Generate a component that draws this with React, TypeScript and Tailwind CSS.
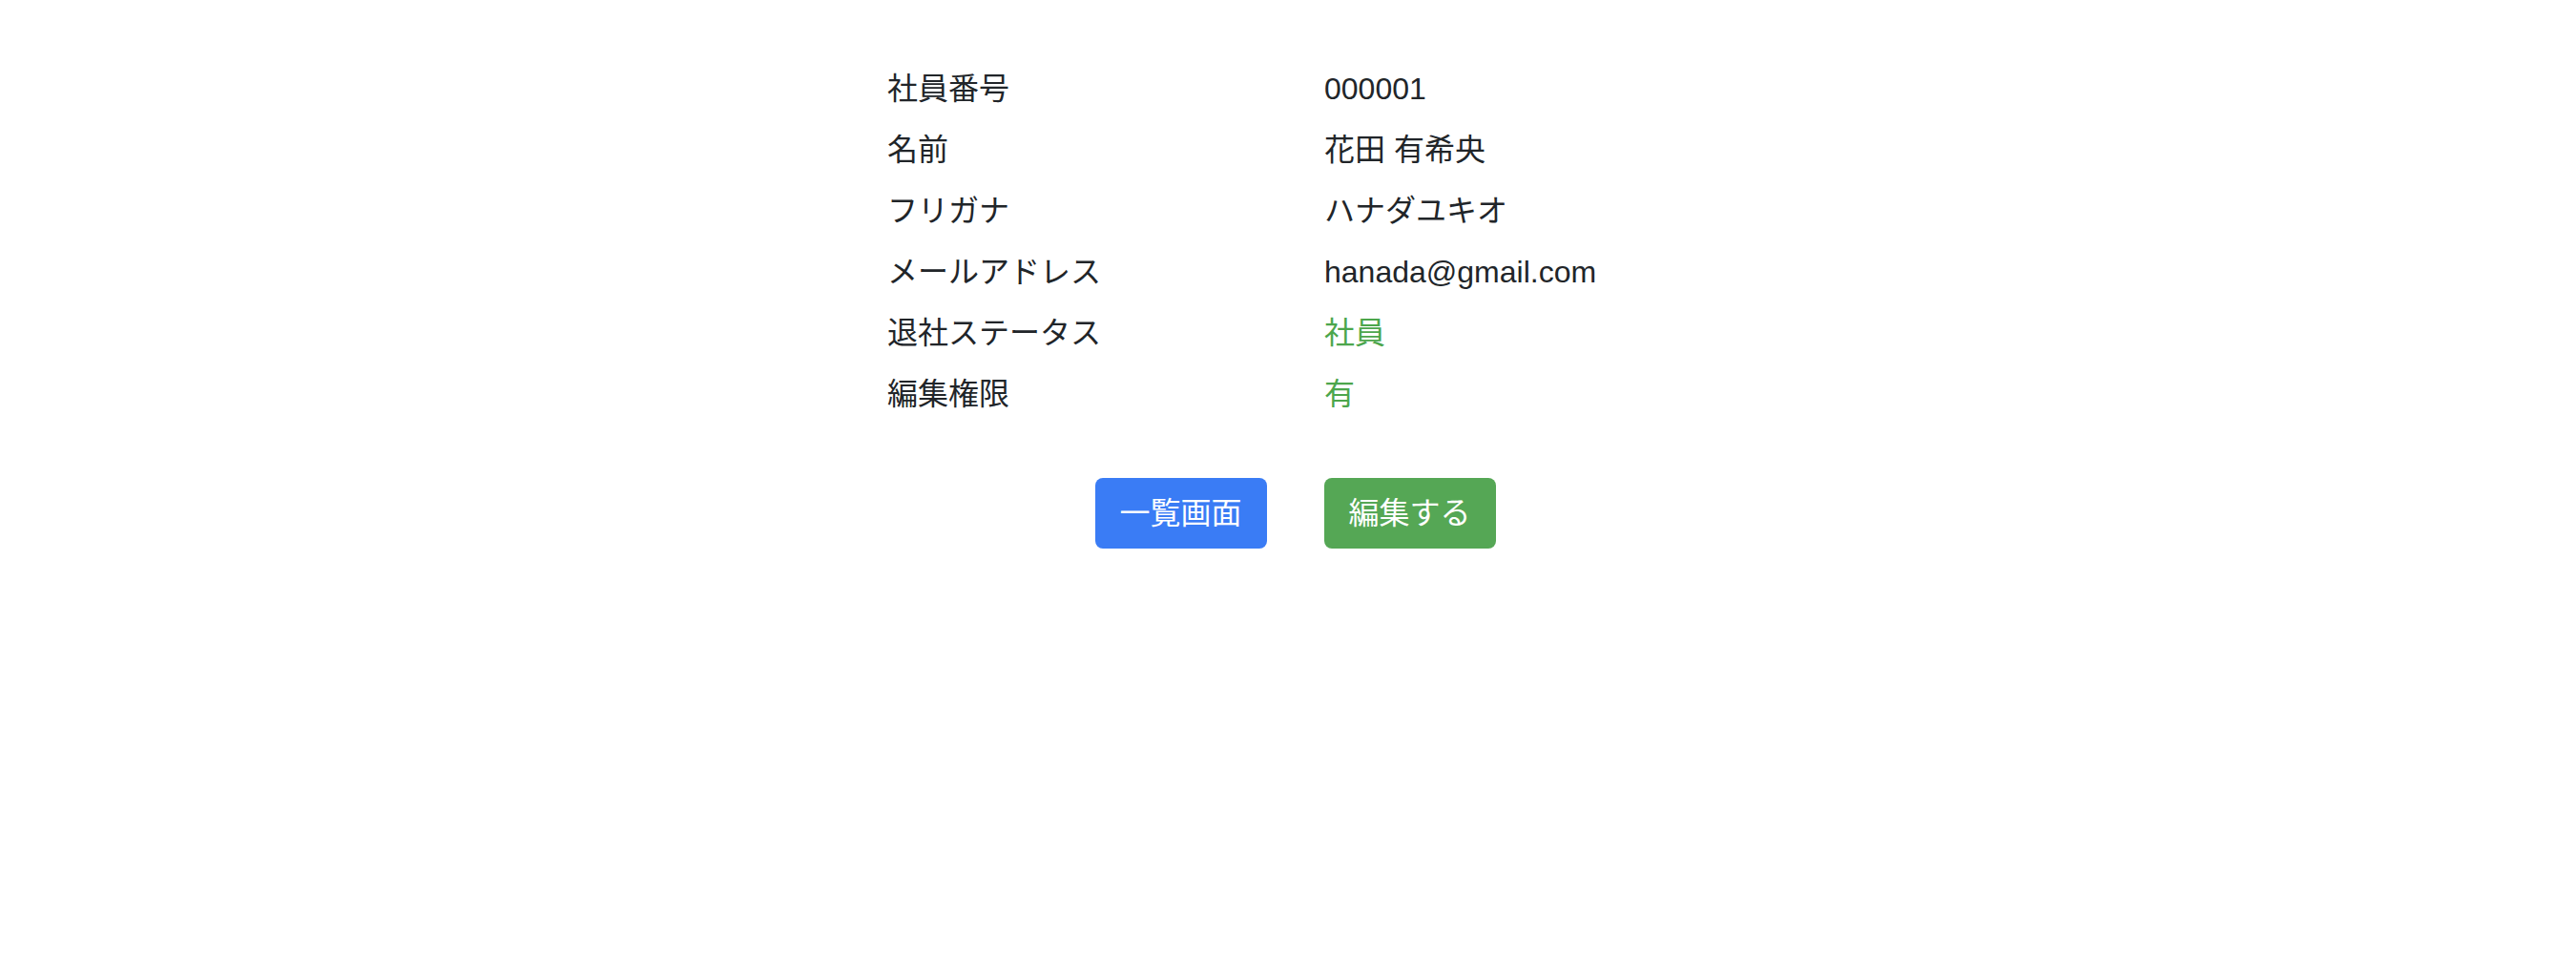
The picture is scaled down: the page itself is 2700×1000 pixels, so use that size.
const rows: { label: string; value: string; green?: boolean }[] = [
  { label: "社員番号", value: "000001" },
  { label: "名前", value: "花田 有希央" },
  { label: "フリガナ", value: "ハナダユキオ" },
  { label: "メールアドレス", value: "hanada@gmail.com" },
  { label: "退社ステータス", value: "社員", green: true },
  { label: "編集権限", value: "有", green: true },
];

export default function App() {
  return (
    <div
      className="min-h-screen bg-white text-[#212529] flex flex-col items-center pt-[61px]"
      style={{ fontFamily: '"Liberation Sans", "Noto Sans CJK JP", sans-serif' }}
    >
      <div className="w-[840px] grid grid-cols-[458px_382px]">
        {rows.map((r) => (
          <div key={r.label} className="contents">
            <div className="text-[32px] leading-[48px] py-[8px]">{r.label}</div>
            <div className={`text-[32px] leading-[48px] py-[8px] ${r.green ? "text-[#4ca64c]" : ""}`}>
              {r.value}
            </div>
          </div>
        ))}
      </div>
      <div className="flex gap-[60px] mt-[56px] pl-[15px]">
        <button className="w-[180px] h-[74px] rounded-[8px] bg-[#3a7cf5] text-white text-[32px] leading-[48px]">
          一覧画面
        </button>
        <button className="w-[180px] h-[74px] rounded-[8px] bg-[#55a755] text-white text-[32px] leading-[48px]">
          編集する
        </button>
      </div>
    </div>
  );
}
